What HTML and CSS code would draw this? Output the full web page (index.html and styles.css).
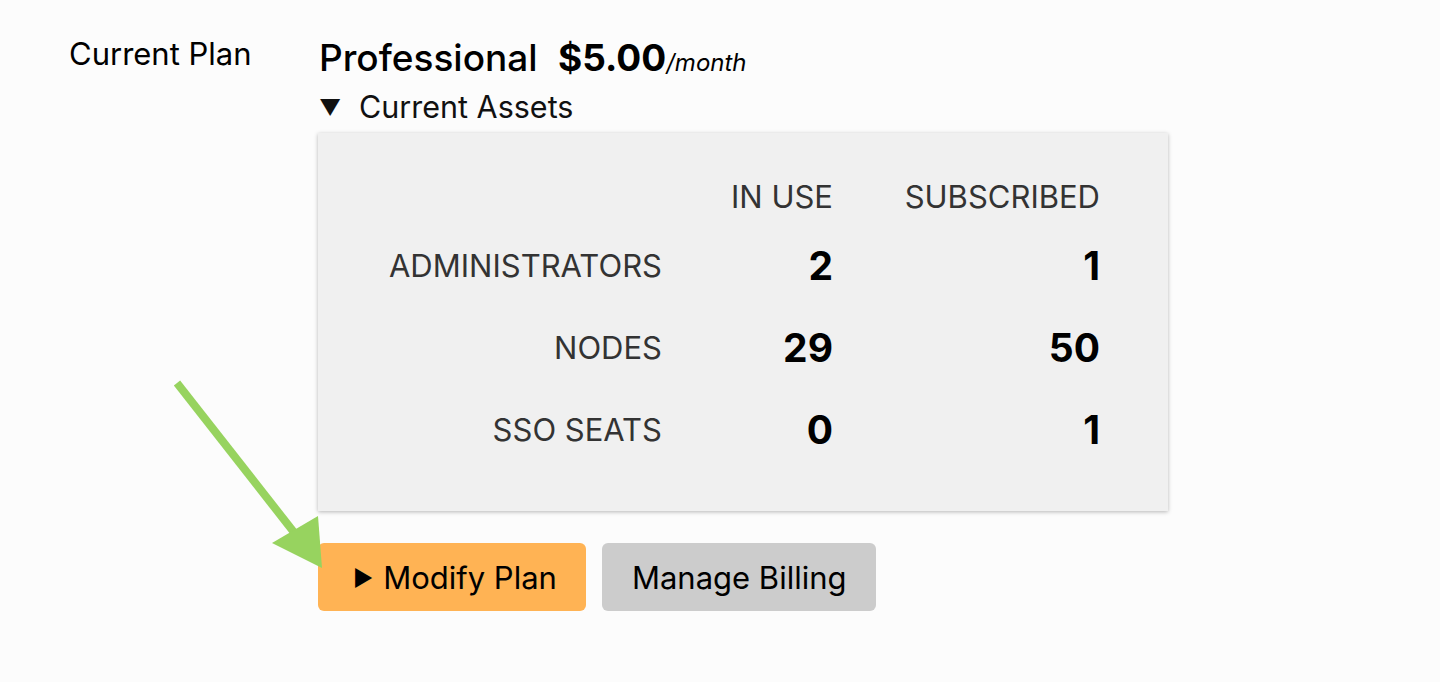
FILE: index.html
```html
<!DOCTYPE html>
<html>
<head>
<meta charset="utf-8">
<link rel="stylesheet" href="styles.css">
</head>
<body>
<div class="page">
  <div class="label">Current Plan</div>
  <div class="content">
    <div class="plan-title">
      <span class="plan-name">Professional</span>
      <span class="plan-price">$5.00</span><span class="plan-period">/month</span>
    </div>
    <div class="assets-toggle"><span class="caret">&#9660;</span>Current Assets</div>
    <div class="assets-box">
      <div class="arow ahead">
        <div></div>
        <div class="num-h">IN USE</div>
        <div class="num-h">SUBSCRIBED</div>
      </div>
      <div class="arow first">
        <div class="rlabel">ADMINISTRATORS</div>
        <div class="num">2</div>
        <div class="num">1</div>
      </div>
      <div class="arow">
        <div class="rlabel">NODES</div>
        <div class="num">29</div>
        <div class="num">50</div>
      </div>
      <div class="arow">
        <div class="rlabel">SSO SEATS</div>
        <div class="num">0</div>
        <div class="num">1</div>
      </div>
    </div>
    <div class="buttons">
      <button class="btn btn-primary"><span class="play">&#9654;</span>Modify Plan</button>
      <button class="btn btn-secondary">Manage Billing</button>
    </div>
  </div>
</div>
<svg class="arrow" width="1440" height="682" viewBox="0 0 1440 682">
  <line x1="177" y1="383" x2="300" y2="540" stroke="#97d35f" stroke-width="8" stroke-linecap="butt"/>
  <polygon points="272,543 318,516 322,568" fill="#97d35f"/>
</svg>
</body>
</html>
```
FILE: styles.css
```css
html, body {
  margin: 0;
  padding: 0;
  background: #fcfcfc;
}
body {
  font-family: Inter, Roboto, "Noto Sans", "Liberation Sans", sans-serif;
  color: #000;
  width: 1440px;
  height: 682px;
  overflow: hidden;
  position: relative;
}
.page {
  display: flex;
  padding: 36px 0 0 69px;
}
.label {
  width: 250px;
  flex: none;
  font-size: 31px;
  line-height: 36px;
}
.content {
  display: flex;
  flex-direction: column;
}
.plan-title {
  font-size: 37px;
  line-height: 44px;
  margin-top: 0;
  white-space: nowrap;
}
.plan-name {
  font-weight: 500;
}
.plan-price {
  font-weight: 700;
  margin-left: 10px;
}
.plan-period {
  font-style: italic;
  font-size: 24px;
}
.assets-toggle {
  font-size: 30.5px;
  line-height: 36px;
  margin-top: 4px;
  color: #111;
}
.caret {
  font-size: 22px;
  display: inline-block;
  width: 40px;
  vertical-align: 3px;
}
.assets-box {
  width: 850px;
  margin-top: 8px;
  margin-left: -1px;
  background: #f0f0f0;
  box-shadow: 0 1px 4px rgba(0,0,0,0.28);
  padding: 47px 0 63px 0;
  box-sizing: border-box;
  height: 378px;
}
.arow {
  display: grid;
  grid-template-columns: 344px 171px 267px;
  height: 34px;
  line-height: 34px;
  margin-top: 48px;
}
.arow.ahead {
  margin-top: 0;
}
.arow.first {
  margin-top: 35px;
}
.num-h, .rlabel {
  text-align: right;
  font-size: 31px;
  color: #333;
}
.num {
  text-align: right;
  font-size: 39px;
  font-weight: 700;
  color: #000;
}
.buttons {
  display: flex;
  gap: 16px;
  margin-top: 32px;
  margin-left: -1px;
}
.btn {
  height: 68px;
  border: none;
  border-radius: 6px;
  font-family: inherit;
  font-size: 31px;
  color: #000;
  padding: 0 30px;
}
.btn-primary {
  background: #ffb354;
  padding: 0 29px 0 35px;
}
.btn-secondary {
  background: #cccccc;
}
.play {
  font-size: 22px;
  margin-right: 10px;
  vertical-align: 3px;
}
.arrow {
  position: absolute;
  left: 0;
  top: 0;
  pointer-events: none;
}
```
